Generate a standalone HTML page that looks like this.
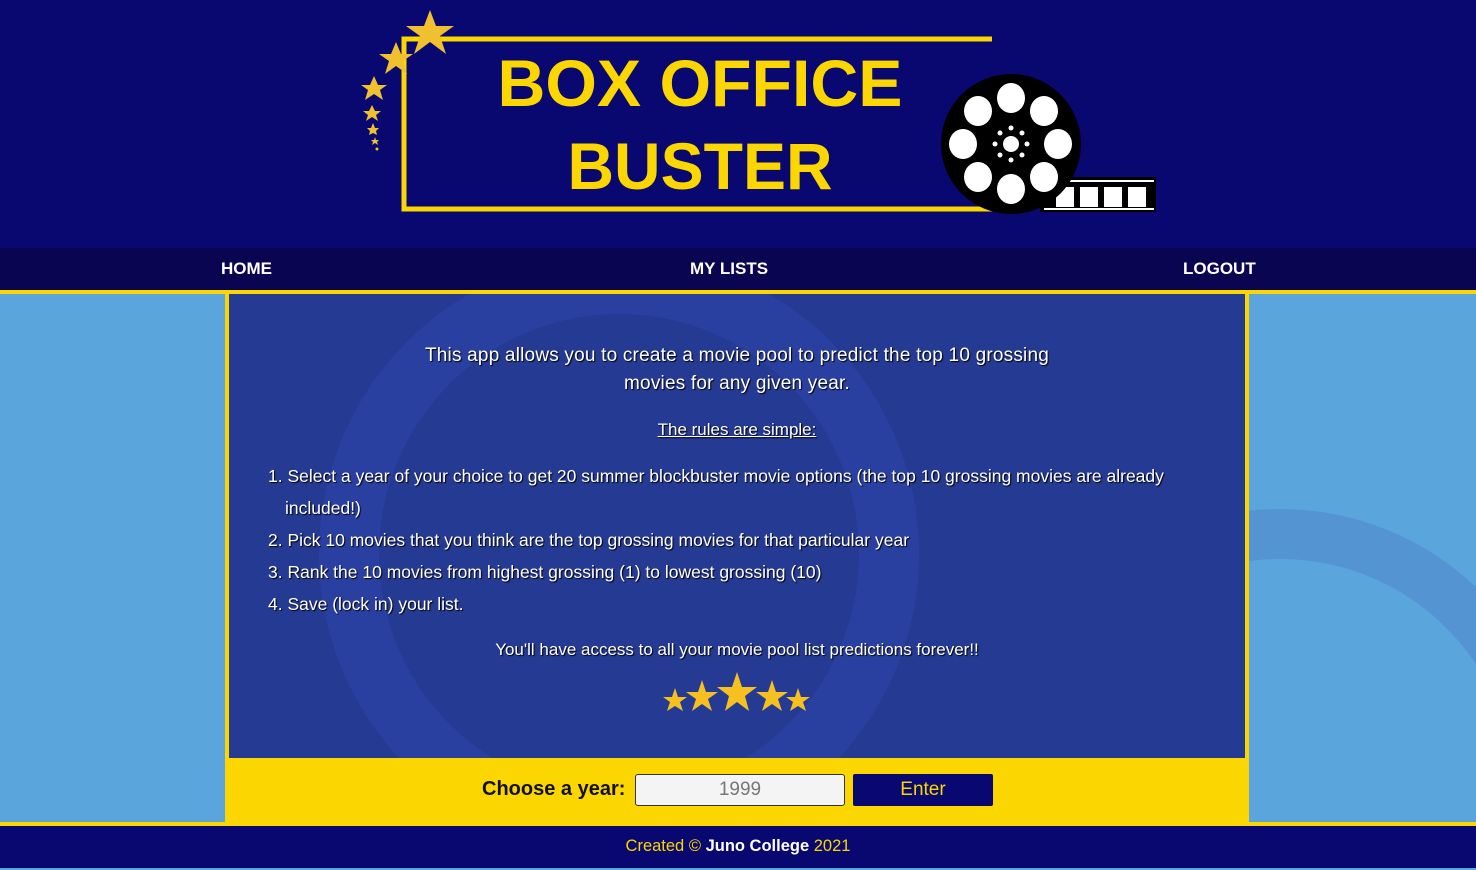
<!DOCTYPE html>
<html><head><meta charset="utf-8"><style>
*{margin:0;padding:0;box-sizing:border-box}
html,body{width:1476px;height:870px;overflow:hidden}
body{background:#5ba5dd;font-family:"Liberation Sans",sans-serif;position:relative}
.header{position:absolute;left:0;top:0;width:1476px;height:248px;background:#080870}
.nav{position:absolute;left:0;top:248px;width:1476px;height:46px;background:#0a0550;border-bottom:4px solid #fcd600}
.nav span{position:absolute;top:11px;color:#fff;font-weight:bold;font-size:17px}
.main{position:absolute;left:225px;top:294px;width:1024px;height:464px;background:#253a93;border-left:4px solid #fcd600;border-right:4px solid #fcd600;color:#fff;text-shadow:1px 1px 1px #000;overflow:hidden}
.intro{position:absolute;top:48px;left:0;width:100%;text-align:center;font-size:19px;line-height:28px;letter-spacing:0.2px}
.rules{position:absolute;top:126px;width:100%;text-align:center;font-size:17px;text-decoration:underline}
ol{position:absolute;top166px;left:56px;width:910px;font-size:17.5px;line-height:32px;padding-left:0;list-style-position:inside}
ol li{padding-left:17px;text-indent:-17px}
.forever{position:absolute;top:346px;width:100%;text-align:center;font-size:17px}
.yel{position:absolute;left:225px;top:758px;width:1024px;height:64px;background:#fcd600}
.foot{position:absolute;left:0;top:822px;width:1476px;height:46px;background:#080870;border-top:4px solid #fcd600;text-align:center;color:#fcd600;font-size:16.5px;line-height:40px}
</style></head><body>
<svg style="position:absolute;left:0;top:294px" width="1476" height="528"><circle cx="1280" cy="500" r="260" fill="none" stroke="#5494d2" stroke-width="50"/></svg>
<div class="header">
<svg width="1476" height="248">
<polyline points="992,39 404,39 404,209 1000,209" fill="none" stroke="#fcd600" stroke-width="5"/>
<g fill="#f0c030"><polygon points="430,10 436,26 454,26 440,36 446,54 430,42 414,54 420,36 406,26 424,26"/>
<polygon points="396,42 401,54 413,54 403,61 407,74 396,66 385,74 389,61 379,54 391,54"/>
<polygon points="374,76 378,85 387,85 380,90 383,100 374,94 365,100 368,90 361,85 370,85"/>
<polygon points="372,105 375,111 381,111 376,115 378,121 372,117 366,121 368,115 363,111 369,111"/>
<polygon points="373,123 375,128 379,128 376,131 377,135 373,133 369,135 370,131 367,128 371,128"/>
<polygon points="375,137 376,140 379,140 377,142 378,145 375,143 372,145 373,142 371,140 374,140"/><circle cx="377" cy="149" r="1.5"/></g>
<text x="700" y="106" text-anchor="middle" fill="#fcd600" font-family="Liberation Sans" font-weight="bold" font-size="66" textLength="405" lengthAdjust="spacingAndGlyphs">BOX OFFICE</text>
<text x="700" y="189" text-anchor="middle" fill="#fcd600" font-family="Liberation Sans" font-weight="bold" font-size="66" textLength="265" lengthAdjust="spacingAndGlyphs">BUSTER</text>
<rect x="1040" y="177" width="116" height="35" fill="#000"/>
<g fill="#fff"><rect x="1056" y="187" width="18" height="20"/><rect x="1080" y="187" width="18" height="20"/><rect x="1104" y="187" width="18" height="20"/><rect x="1128" y="187" width="18" height="20"/>
<rect x="1044" y="180" width="110" height="2"/><rect x="1044" y="208" width="110" height="2"/></g>
<ellipse cx="1011" cy="144" rx="70" ry="70" fill="#000"/>
<g fill="#fff"><ellipse cx="1011" cy="98" rx="14" ry="15"/><ellipse cx="1011" cy="189" rx="14" ry="15"/><ellipse cx="963" cy="144" rx="14" ry="15"/><ellipse cx="1058" cy="144" rx="14" ry="15"/>
<ellipse cx="978" cy="111" rx="14" ry="15"/><ellipse cx="1044" cy="111" rx="14" ry="15"/><ellipse cx="978" cy="177" rx="14" ry="15"/><ellipse cx="1044" cy="177" rx="14" ry="15"/>
<circle cx="1011" cy="144" r="8"/><circle cx="1011" cy="128" r="2.5"/><circle cx="1011" cy="160" r="2.5"/><circle cx="995" cy="144" r="2.5"/><circle cx="1027" cy="144" r="2.5"/><circle cx="1000" cy="133" r="2.5"/><circle cx="1022" cy="133" r="2.5"/><circle cx="1000" cy="155" r="2.5"/><circle cx="1022" cy="155" r="2.5"/></g>
</svg></div>
<div class="nav"><span style="left:221px">HOME</span><span style="left:690px">MY LISTS</span><span style="left:1183px">LOGOUT</span></div>
<div class="main">
<svg style="position:absolute;left:0;top:0" width="1016" height="464"><circle cx="390" cy="260" r="270" fill="none" stroke="#2a40a0" stroke-width="60"/></svg>
<div class="intro">This app allows you to create a movie pool to predict the top 10 grossing<br>movies for any given year.</div>
<div class="rules">The rules are simple:</div>
<ol style="top:166px;left:39px"><li>Select a year of your choice to get 20 summer blockbuster movie options (the top 10 grossing movies are already included!)</li><li>Pick 10 movies that you think are the top grossing movies for that particular year</li><li>Rank the 10 movies from highest grossing (1) to lowest grossing (10)</li><li>Save (lock in) your list.</li></ol>
<div class="forever">You'll have access to all your movie pool list predictions forever!!</div>
<svg style="position:absolute;left:432px;top:378px" width="150" height="45" fill="#f5c020">
<polygon points="14,16 17,25 26,25 19,30 22,39 14,34 6,39 9,30 2,25 11,25"/>
<polygon points="41,8 45,20 57,20 47,27 51,39 41,32 31,39 35,27 25,20 37,20"/>
<polygon points="76,0 81,15 96,15 84,24 88,39 76,30 64,39 68,24 56,15 71,15"/>
<polygon points="111,8 115,20 127,20 117,27 121,39 111,32 101,39 105,27 95,20 107,20"/>
<polygon points="137,16 140,25 149,25 142,30 145,39 137,34 129,39 132,30 125,25 134,25"/></svg>
</div>
<div class="yel">
<span style="position:absolute;left:257px;top:20px;font-weight:bold;font-size:20px;color:#111">Choose a year:</span>
<div style="position:absolute;left:410px;top:16px;width:210px;height:32px;background:#f4f4f4;border:1px solid #333;border-radius:3px;text-align:center;color:#777;font-size:19px;line-height:30px">1999</div>
<div style="position:absolute;left:628px;top:16px;width:140px;height:32px;background:#080870;border-radius:2px;text-align:center;color:#fcd600;font-size:19px;line-height:32px">Enter</div>
</div>
<div class="foot">Created © <b style="color:#fff">Juno College</b> 2021</div>
</body></html>
